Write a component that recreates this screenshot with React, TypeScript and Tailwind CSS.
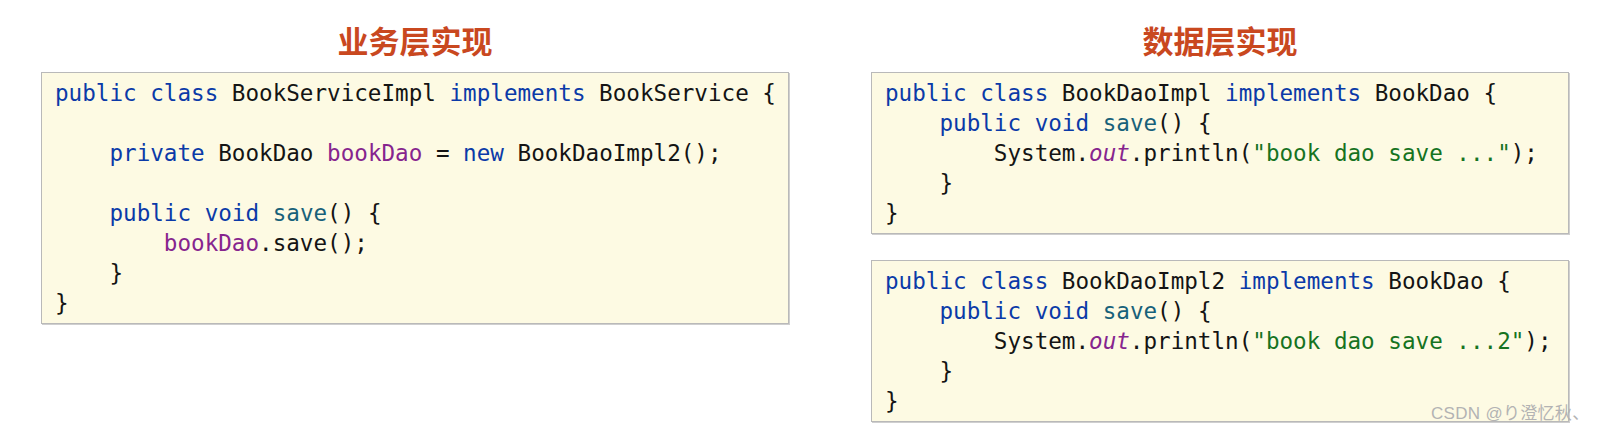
import React from 'react';

const K = ({ children }: { children: React.ReactNode }) => <span className="text-[#0b3aa8]">{children}</span>;
const M = ({ children }: { children: React.ReactNode }) => <span className="text-[#17617a]">{children}</span>;
const F = ({ children }: { children: React.ReactNode }) => <span className="text-[#86248e]">{children}</span>;
const S = ({ children }: { children: React.ReactNode }) => <span className="text-[#16731f]">{children}</span>;

function CodeBox({ children }: { children: React.ReactNode }) {
  return (
    <div className="bg-[#fdfae3] border border-[#b9b9b9] shadow-[1px_1px_0_#cfcfcf] px-[13px] py-[5px]">
      <pre
        className="text-[22.6px] leading-[30px] text-[#141414] whitespace-pre"
        style={{ fontFamily: '"DejaVu Sans Mono", "Liberation Mono", monospace' }}
      >
        {children}
      </pre>
    </div>
  );
}

function Title({ text }: { text: string }) {
  return (
    <h2
      className="text-center text-[31px] leading-none font-bold text-[#c9481f] pt-[24px] mb-[17px]"
      style={{ fontFamily: '"Noto Sans CJK SC", "Noto Sans", sans-serif' }}
    >
      {text}
    </h2>
  );
}

export default function App() {
  return (
    <div className="relative w-[1599px] h-[434px] bg-white overflow-hidden">
      <div className="flex pl-[41px] gap-[82px]">
        <div className="w-[748px]">
          <Title text="业务层实现" />
          <CodeBox>
            <K>public class</K> BookServiceImpl <K>implements</K> BookService {'{'}{'\n'}
            {'\n'}
            {'    '}<K>private</K> BookDao <F>bookDao</F> = <K>new</K> BookDaoImpl2();{'\n'}
            {'\n'}
            {'    '}<K>public void</K> <M>save</M>() {'{'}{'\n'}
            {'        '}<F>bookDao</F>.save();{'\n'}
            {'    }'}{'\n'}
            {'}'}
          </CodeBox>
        </div>
        <div className="w-[698px]">
          <Title text="数据层实现" />
          <div className="flex flex-col gap-[26px]">
            <CodeBox>
              <K>public class</K> BookDaoImpl <K>implements</K> BookDao {'{'}{'\n'}
              {'    '}<K>public void</K> <M>save</M>() {'{'}{'\n'}
              {'        '}System.<F><i>out</i></F>.println(<S>"book dao save ..."</S>);{'\n'}
              {'    }'}{'\n'}
              {'}'}
            </CodeBox>
            <CodeBox>
              <K>public class</K> BookDaoImpl2 <K>implements</K> BookDao {'{'}{'\n'}
              {'    '}<K>public void</K> <M>save</M>() {'{'}{'\n'}
              {'        '}System.<F><i>out</i></F>.println(<S>"book dao save ...2"</S>);{'\n'}
              {'    }'}{'\n'}
              {'}'}
            </CodeBox>
          </div>
        </div>
      </div>
      <div
        className="absolute left-[1431px] top-[403px] text-[17px] leading-[22px] tracking-[0.3px] text-[#b3b3b3]"
        style={{ fontFamily: '"Liberation Sans", "Noto Sans CJK SC", sans-serif' }}
      >
        CSDN @り澄忆秋、
      </div>
    </div>
  );
}
